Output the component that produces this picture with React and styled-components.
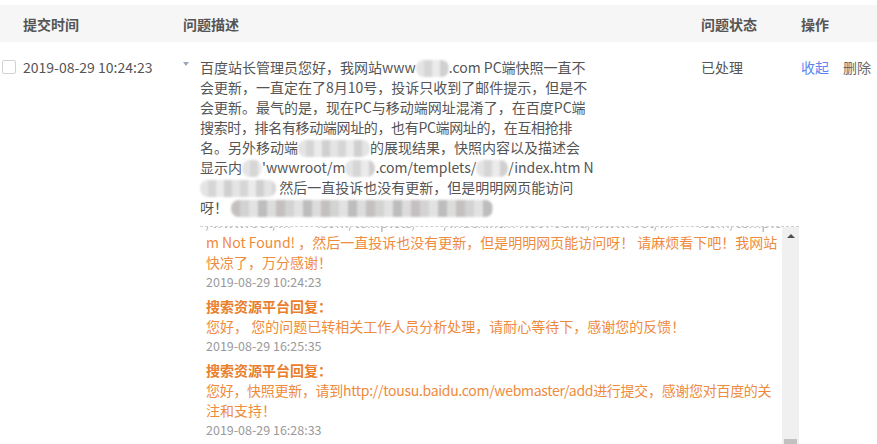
import React from "react";
import styled, { createGlobalStyle } from "styled-components";

const GlobalStyle = createGlobalStyle`
  html, body { margin: 0; padding: 0; background: #fff; }
  body {
    font-family: "Noto Sans CJK SC", "Microsoft YaHei", "Noto Sans", sans-serif;
    font-size: 14px;
    color: #555;
    overflow: hidden;
  }
`;

const Page = styled.div`
  width: 877px;
  padding-top: 5px;
`;

const Table = styled.div`
  display: grid;
  grid-template-columns: 183px 518px 100px 76px;
`;

const HeadCell = styled.div`
  height: 37px;
  display: flex;
  align-items: center;
  background: #f6f6f6;
  padding-left: ${(p) => p.$pad || 0}px;
  font-weight: 700;
  color: #555;
  font-size: 14px;
`;

const Cell = styled.div`
  padding-top: 15px;
  line-height: 20px;
  white-space: nowrap;
`;

const TimeCell = styled(Cell)`
  display: flex;
  align-items: flex-start;
  gap: 7px;
  padding-left: 2px;
`;

const CheckBox = styled.span`
  display: inline-block;
  box-sizing: border-box;
  width: 14px;
  height: 14px;
  margin-top: 3px;
  border: 1px solid #d2d2d2;
  border-radius: 2px;
  background: #fff;
`;

const DescCell = styled(Cell)`
  display: flex;
  align-items: flex-start;
`;

const Caret = styled.span`
  width: 0;
  height: 0;
  margin-top: 5px;
  margin-right: 11px;
  border-left: 3.5px solid transparent;
  border-right: 3.5px solid transparent;
  border-top: 4px solid #9ea7ba;
`;

const DescText = styled.div`
  color: #555;
`;

const Line = styled.div`
  height: 20px;
  white-space: nowrap;
  letter-spacing: ${(p) => (p.$tight ? "-0.35px" : "0")};
`;

const Mosaic = styled.span`
  display: inline-block;
  width: ${(p) => p.$w}px;
  height: 17px;
  vertical-align: -4px;
  border-radius: 8px;
  filter: blur(1.2px);
  background: ${(p) =>
    p.$dark
      ? "repeating-linear-gradient(90deg, #c4c0bf 0 9px, #d3d3d3 9px 18px, #e2e2e2 18px 27px, #bdbdbd 27px 36px, #dcdcdc 36px 45px)"
      : "repeating-linear-gradient(90deg, #e4e4e4 0 8px, #d6d6d6 8px 16px, #ebebeb 16px 24px, #d0d0d0 24px 32px)"};
`;

const Status = styled(Cell)``;

const Actions = styled(Cell)`
  display: flex;
  gap: 14px;
`;

const ActionLink = styled.span`
  color: ${(p) => (p.$primary ? "#5d84f0" : "#666")};
  cursor: pointer;
`;

const ReplyBox = styled.div`
  grid-column: 2 / 5;
  margin-left: 17px;
  margin-top: 9px;
  width: 599px;
  height: 230px;
  display: flex;
  border-top: 1px dashed #cfcfcf;
`;

const ReplyViewport = styled.div`
  flex: 1;
  overflow: hidden;
  padding-left: 6px;
`;

const ReplyInner = styled.div`
  margin-top: -15px;
  font-size: 14px;
  line-height: 20px;
  white-space: nowrap;
`;

const ClippedLine = styled.div`
  height: 20px;
  color: #b9b3ad;
  filter: blur(0.6px);
`;

const Message = styled.div`
  margin-bottom: 4px;
`;

const MsgTitle = styled.div`
  color: #e97f2e;
  font-weight: 700;
`;

const MsgText = styled.div`
  color: #ee8b3d;
  letter-spacing: ${(p) => (p.$tight ? "-0.3px" : "0")};
`;

const MsgDate = styled.div`
  color: #9a9a9a;
  font-size: 12.5px;
`;

const Scrollbar = styled.div`
  width: 17px;
  background: #f0f0f0;
  display: flex;
  flex-direction: column;
  align-items: center;
`;

const ScrollArrow = styled.span`
  margin-top: 7px;
  width: 0;
  height: 0;
  border-left: 4px solid transparent;
  border-right: 4px solid transparent;
  border-bottom: 4px solid #505050;
`;

const ScrollThumb = styled.span`
  margin-top: 201px;
  width: 13px;
  height: 40px;
  background: #c1c1c1;
`;

export default function App() {
  return (
    <>
      <GlobalStyle />
      <Page>
        <Table>
          <HeadCell $pad={23}>提交时间</HeadCell>
          <HeadCell>问题描述</HeadCell>
          <HeadCell>问题状态</HeadCell>
          <HeadCell>操作</HeadCell>

          <TimeCell>
            <CheckBox />
            <span>2019-08-29 10:24:23</span>
          </TimeCell>
          <DescCell>
            <Caret />
            <DescText>
              <Line>
                百度站长管理员您好，我网站www<Mosaic $w={33} />.com PC端快照一直不
              </Line>
              <Line>会更新，一直定在了8月10号，投诉只收到了邮件提示，但是不</Line>
              <Line>会更新。最气的是，现在PC与移动端网址混淆了，在百度PC端</Line>
              <Line $tight>搜索时，排名有移动端网址的，也有PC端网址的，在互相抢排</Line>
              <Line>
                名。另外移动端<Mosaic $w={72} />的展现结果，快照内容以及描述会
              </Line>
              <Line>
                显示内<Mosaic $w={20} />'wwwroot/m<Mosaic $w={30} />.com/templets/
                <Mosaic $w={32} />/index.htm N
              </Line>
              <Line>
                <Mosaic $w={76} />
                {" "}然后一直投诉也没有更新，但是明明网页能访问
              </Line>
              <Line>
                呀！ <Mosaic $w={262} $dark />
              </Line>
            </DescText>
          </DescCell>
          <Status>已处理</Status>
          <Actions>
            <ActionLink $primary>收起</ActionLink>
            <ActionLink>删除</ActionLink>
          </Actions>

          <ReplyBox>
            <ReplyViewport>
              <ReplyInner>
                <ClippedLine>
                  /wwwroot/m****.com/templets/****/index.htm Not Found/wwwroot/m****.com/templets/***/index.htm
                </ClippedLine>
                <Message>
                  <MsgText>
                    m Not Found! ，然后一直投诉也没有更新，但是明明网页能访问呀！ 请麻烦看下吧！我网站
                  </MsgText>
                  <MsgText>快凉了，万分感谢！</MsgText>
                  <MsgDate>2019-08-29 10:24:23</MsgDate>
                </Message>
                <Message>
                  <MsgTitle>搜索资源平台回复：</MsgTitle>
                  <MsgText>您好， 您的问题已转相关工作人员分析处理，请耐心等待下，感谢您的反馈！</MsgText>
                  <MsgDate>2019-08-29 16:25:35</MsgDate>
                </Message>
                <Message>
                  <MsgTitle>搜索资源平台回复：</MsgTitle>
                  <MsgText $tight>
                    您好，快照更新，请到http://tousu.baidu.com/webmaster/add进行提交，感谢您对百度的关
                  </MsgText>
                  <MsgText>注和支持！</MsgText>
                  <MsgDate>2019-08-29 16:28:33</MsgDate>
                </Message>
              </ReplyInner>
            </ReplyViewport>
            <Scrollbar>
              <ScrollArrow />
              <ScrollThumb />
            </Scrollbar>
          </ReplyBox>
        </Table>
      </Page>
    </>
  );
}
